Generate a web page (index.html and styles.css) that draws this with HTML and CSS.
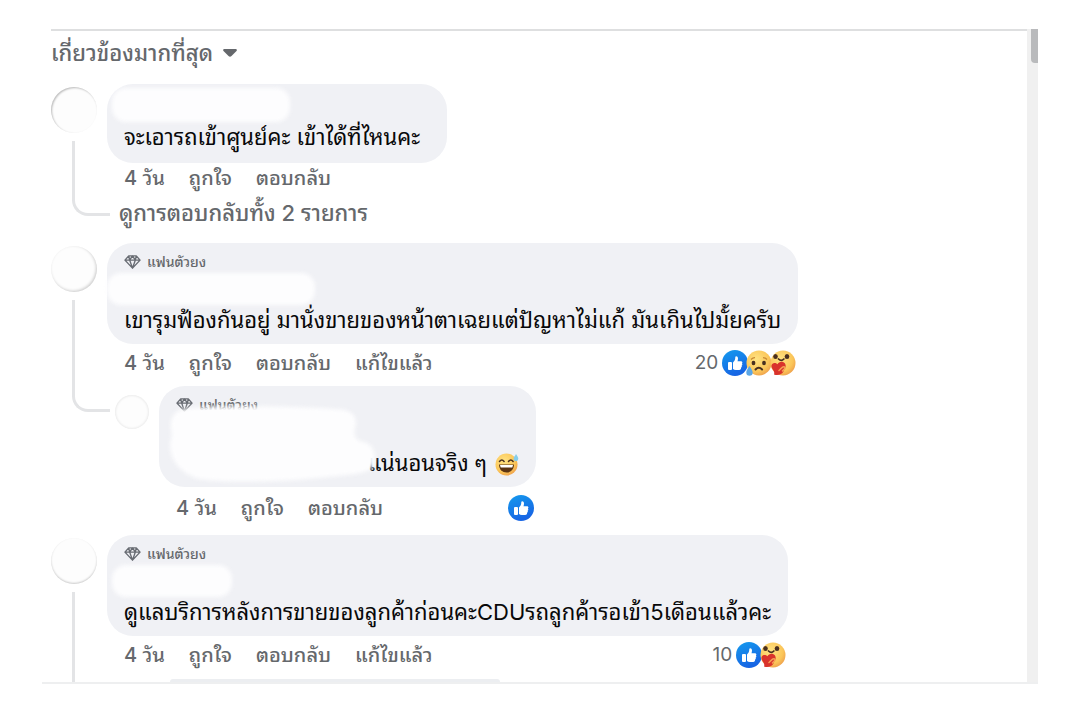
FILE: index.html
```html
<!DOCTYPE html>
<html lang="th">
<head>
<meta charset="utf-8">
<meta name="viewport" content="width=device-width, initial-scale=1">
<title>ความคิดเห็น</title>
<link rel="stylesheet" href="styles.css">
</head>
<body>
<svg class="defs" aria-hidden="true">
  <defs>
    <linearGradient id="blue" x1="0" y1="0" x2="0.4" y2="1"><stop offset="0" stop-color="#149bee"/><stop offset="1" stop-color="#1765e4"/></linearGradient>
    <radialGradient id="yellow" cx="0.4" cy="0.35" r="0.7"><stop offset="0" stop-color="#ffe383"/><stop offset="0.7" stop-color="#fbc659"/><stop offset="1" stop-color="#ee9f4c"/></radialGradient>
    <symbol id="like" viewBox="0 0 26 26">
      <circle cx="13" cy="13" r="13" fill="url(#blue)"/>
      <rect x="6" y="12" width="4" height="8" rx="1" fill="#fff"/>
      <path d="M11 12.500c1.600-1.500 2.300-3 2.300-5.500 0-1.300 2.700-1.300 2.700 1.500 0 1-.3 2-.5 2.800H19c1.500 0 1.800 1.600.9 2.300.7.700.5 1.800-.3 2.200.5.700.2 1.600-.6 2 .3 1.200-.5 2.200-1.800 2.200h-3.400c-1.200 0-2-.3-2.800-.9z" fill="#fff"/>
    </symbol>
    <symbol id="sad" viewBox="0 0 26 26">
      <circle cx="13" cy="13" r="12.500" fill="url(#yellow)"/>
      <path d="M5 9.500q2-2 4-1.800M17 7.700q2.500 0 4 1.800" fill="none" stroke="#c98a35" stroke-width="1.200"/>
      <ellipse cx="7.500" cy="13" rx="1.900" ry="2.200" fill="#4a3020"/><ellipse cx="18" cy="13" rx="1.900" ry="2.200" fill="#4a3020"/>
      <path d="M9.500 19.500q3.300-3.500 6.600 0" fill="none" stroke="#4a3020" stroke-width="2" stroke-linecap="round"/>
      <path d="M3.500 16C1.500 19 .3 20.500.3 22.500a3.200 3.200 0 0 0 6.400 0C6.700 20.500 5 18.500 3.500 16z" fill="#5ba6e6"/>
    </symbol>
    <symbol id="care" viewBox="0 0 26 26">
      <circle cx="13" cy="13" r="12.500" fill="url(#yellow)"/>
      <ellipse cx="5.500" cy="6.500" rx="2.300" ry="2.500" fill="#4a3020"/><ellipse cx="17" cy="6.500" rx="2.300" ry="2.500" fill="#4a3020"/>
      <path d="M8.500 9q2.800 2.700 5.400 0" fill="none" stroke="#4a3020" stroke-width="1.700" stroke-linecap="round"/>
      <path d="M4 24.500C5.500 21 1 19 1.500 15.500c.5-3 4-3.400 6-1.200 1-2.600 5.500-3.600 7.500-.8 2 4-1 5-1.500 8-1.500 3-5.500 4.500-9.500 3z" fill="#d9332c"/>
      <path d="M9 20.500c2-1.500 3.500-4.500 5.500-3.500 1.500 1-1 2.500-2 4" fill="none" stroke="#f6a055" stroke-width="1.500" stroke-linecap="round"/>
    </symbol>
    <symbol id="gem" viewBox="0 0 18 16">
      <path d="M5 1.500h8l4 4.500-8 8.500L1 6zM1 6h16M5 1.500 6 6l3 8.500L12 6l1-4.500M6 6l3-4.500L12 6" fill="none" stroke="#686c73" stroke-width="1.500" stroke-linejoin="round"/>
    </symbol>
    <symbol id="sweat" viewBox="0 0 24 24">
      <circle cx="11.500" cy="12.500" r="11" fill="url(#yellow)"/>
      <path d="M4.500 9.500q2.300-3 4.600 0M13.500 9.500q2.300-3 4.600 0" fill="none" stroke="#4a3020" stroke-width="1.500" stroke-linecap="round"/>
      <path d="M4 12.500h15c0 5-3.500 8-7.500 8s-7.500-3-7.500-8z" fill="#5b3413"/>
      <path d="M5 13h13l-.7 2.500H5.700z" fill="#fff"/>
      <path d="M21 2c1.500 2.500 2.300 3.300 2.300 4.800a2.400 2.400 0 0 1-4.800 0C18.500 5.300 20 4 21 2z" fill="#86cdea"/>
    </symbol>
  </defs>
</svg>
<main class="panel">
  <div class="feed">
    <button class="sort" type="button">เกี่ยวข้องมากที่สุด <svg class="caret" viewBox="0 0 14 8" aria-hidden="true"><path d="M1 0h12q1.500.5.500 2L8.500 7q-1.500 1.500-3 0L.5 2Q-.5.500 1 0z" fill="#65686c"/></svg></button>

    <article class="comment">
      <div class="rail"><span class="avatar avatar-left"></span><span class="line line-hook line-first"></span></div>
      <div class="body">
        <div class="entry">
          <div class="bubble bubble-short"><span class="mask mask-name"></span><p class="text">จะเอารถเข้าศูนย์คะ เข้าได้ที่ไหนคะ</p></div>
          <div class="actions"><a href="#">4 วัน</a><button type="button">ถูกใจ</button><button type="button">ตอบกลับ</button></div>
        </div>
        <button class="more" type="button">ดูการตอบกลับทั้ง 2 รายการ</button>
      </div>
    </article>

    <article class="comment">
      <div class="rail"><span class="avatar avatar-right"></span><span class="line line-hook line-second"></span></div>
      <div class="body">
        <div class="entry">
          <div class="bubble"><div class="fan"><svg class="gem"><use href="#gem"/></svg>แฟนตัวยง</div><span class="mask mask-wide"></span><p class="text">เขารุมฟ้องกันอยู่ มานั่งขายของหน้าตาเฉยแต่ปัญหาไม่แก้ มันเกินไปมั้ยครับ</p></div>
          <div class="actions"><a href="#">4 วัน</a><button type="button">ถูกใจ</button><button type="button">ตอบกลับ</button><button type="button">แก้ไขแล้ว</button>
            <span class="reactions">20 <svg class="react"><use href="#like"/></svg><svg class="react"><use href="#sad"/></svg><svg class="react"><use href="#care"/></svg></span></div>
        </div>
        <div class="reply">
          <span class="avatar avatar-small"></span>
          <div class="entry">
            <div class="bubble bubble-reply"><div class="fan"><svg class="gem"><use href="#gem"/></svg>แฟนตัวยง</div><p class="text text-end">แน่นอนจริง ๆ <svg class="emoji"><use href="#sweat"/></svg></p>
              <svg class="smear" viewBox="0 0 212 84" aria-hidden="true"><path d="M16 6C60 1 150 4 178 7q14 4 10 18-2 6 2 12c16 4 17 8 18 18 1 13-10 15-28 17-50 6-110 9-148 4C10 70-2 50 5 32 2 18 4 10 16 6z" fill="#fdfdfe"/></svg></div>
            <div class="actions"><a href="#">4 วัน</a><button type="button">ถูกใจ</button><button type="button">ตอบกลับ</button><span class="reactions reactions-edge"><svg class="react"><use href="#like"/></svg></span></div>
          </div>
        </div>
      </div>
    </article>

    <article class="comment">
      <div class="rail"><span class="avatar avatar-bottom"></span><span class="line"></span></div>
      <div class="body">
        <div class="entry">
          <div class="bubble"><div class="fan"><svg class="gem"><use href="#gem"/></svg>แฟนตัวยง</div><span class="mask mask-small"></span><p class="text">ดูแลบริการหลังการขายของลูกค้าก่อนคะCDUรถลูกค้ารอเข้า5เดือนแล้วคะ</p></div>
          <div class="actions"><a href="#">4 วัน</a><button type="button">ถูกใจ</button><button type="button">ตอบกลับ</button><button type="button">แก้ไขแล้ว</button>
            <span class="reactions">10 <svg class="react"><use href="#like"/></svg><svg class="react"><use href="#care"/></svg></span></div>
        </div>
        <div class="next"></div>
      </div>
    </article>
  </div>
  <div class="track"><div class="thumb"></div></div>
</main>
</body>
</html>
```
FILE: styles.css
```css
* { box-sizing: border-box; }
body { margin: 0; padding: 29px 42px; background: #fff; color: #080809; font-family: Inter, "Noto Sans Thai Looped", Loma, Garuda, Waree, "Noto Sans Thai", "Noto Sans", sans-serif; font-size: 22px; }
button { padding: 0; border: 0; background: none; color: inherit; font: inherit; cursor: pointer; }
a { color: inherit; text-decoration: none; }
.defs { position: absolute; width: 0; height: 0; }
.panel { display: flex; padding-left: 9px; border-bottom: 2px solid #eeeff0; }
.feed { flex: 1; min-width: 0; padding-top: 1px; border-top: 2px solid #dedfe0; }
.track { width: 11px; background: #f0f0f0; }
.thumb { width: 7px; height: 34px; margin-left: auto; background: #b9babc; border-bottom-left-radius: 4px; }
.sort { display: flex; align-items: center; gap: 10px; height: 42px; color: #65686c; font-size: 22px; line-height: 42px; white-space: nowrap; }
.sort, .fan, .actions, .more { font-weight: 500; }
.caret { width: 14px; height: 8px; }
.comment { display: grid; grid-template-columns: 56px 1fr; margin-top: 10px; }
.comment + .comment { margin-top: 9px; }
.rail { display: flex; flex-direction: column; gap: 8px; padding-top: 3px; }
.avatar { flex: none; width: 46px; height: 46px; border-radius: 50%; background: #fdfdfd; box-shadow: inset 0 0 3px #dcdcdc; }
.avatar-left { box-shadow: inset 1px 1px 2px #bbb; }
.avatar-right { box-shadow: inset -1px -1px 3px #ccc; }
.avatar-bottom { box-shadow: inset 0 -1px 2px #ccc; }
.avatar-small { width: 34px; height: 34px; margin-top: 9px; }
.line { flex: 1; width: 38px; margin-left: 21px; border-left: 3px solid #e3e4e6; }
.line-hook { border-bottom: 3px solid #e3e4e6; border-bottom-left-radius: 16px; }
.line-first { margin-bottom: 18px; }
.line-second { margin-bottom: 114px; }
.body { min-width: 0; }
.entry { width: fit-content; }
.bubble { position: relative; display: flex; flex-direction: column; min-height: 101px; padding: 8px 17px; border-radius: 26px; background: #f0f1f5; }
.bubble-short { min-width: 340px; min-height: 79px; padding-top: 4px; padding-bottom: 10px; }
.bubble-reply { width: 377px; }
.fan { display: flex; align-items: center; gap: 6px; height: 22px; color: #65686c; font-size: 14px; line-height: 22px; }
.gem { width: 17px; height: 16px; }
.text { margin: auto 0 0; line-height: 31px; white-space: nowrap; }
.text-end { display: flex; align-items: center; justify-content: flex-end; gap: 8px; }
.emoji { width: 24px; height: 24px; }
.mask { display: block; height: 32px; border-radius: 14px; background: #fdfdfe; filter: blur(2px); }
.mask-name { width: 178px; height: 34px; margin-left: -12px; }
.mask-wide { width: 208px; margin-left: -17px; }
.mask-small { width: 120px; margin-left: -12px; }
.smear { position: absolute; left: 8px; top: 17px; width: 212px; height: 84px; filter: blur(2px); }
.actions { display: flex; align-items: center; gap: 24px; height: 38px; padding-left: 17px; color: #65686c; font-size: 20px; line-height: 38px; white-space: nowrap; }
.bubble-short + .actions { height: 30px; line-height: 30px; }
.reactions { display: flex; align-items: center; margin-left: auto; padding-right: 4px; font-size: 19px; font-weight: 400; }
.react { width: 26px; height: 26px; margin-right: -2px; }
.react:first-of-type { margin-left: 4px; }
.more { display: block; height: 41px; padding-left: 12px; color: #65686c; font-size: 22px; line-height: 41px; white-space: nowrap; }
.reply { display: flex; gap: 10px; margin-top: 4px; padding-left: 8px; }
.reply .actions { height: 39px; padding-top: 2px; }
.next { width: 330px; height: 3px; margin: 5px 0 0 63px; border-radius: 16px 16px 0 0; background: #eceef1; }
```
